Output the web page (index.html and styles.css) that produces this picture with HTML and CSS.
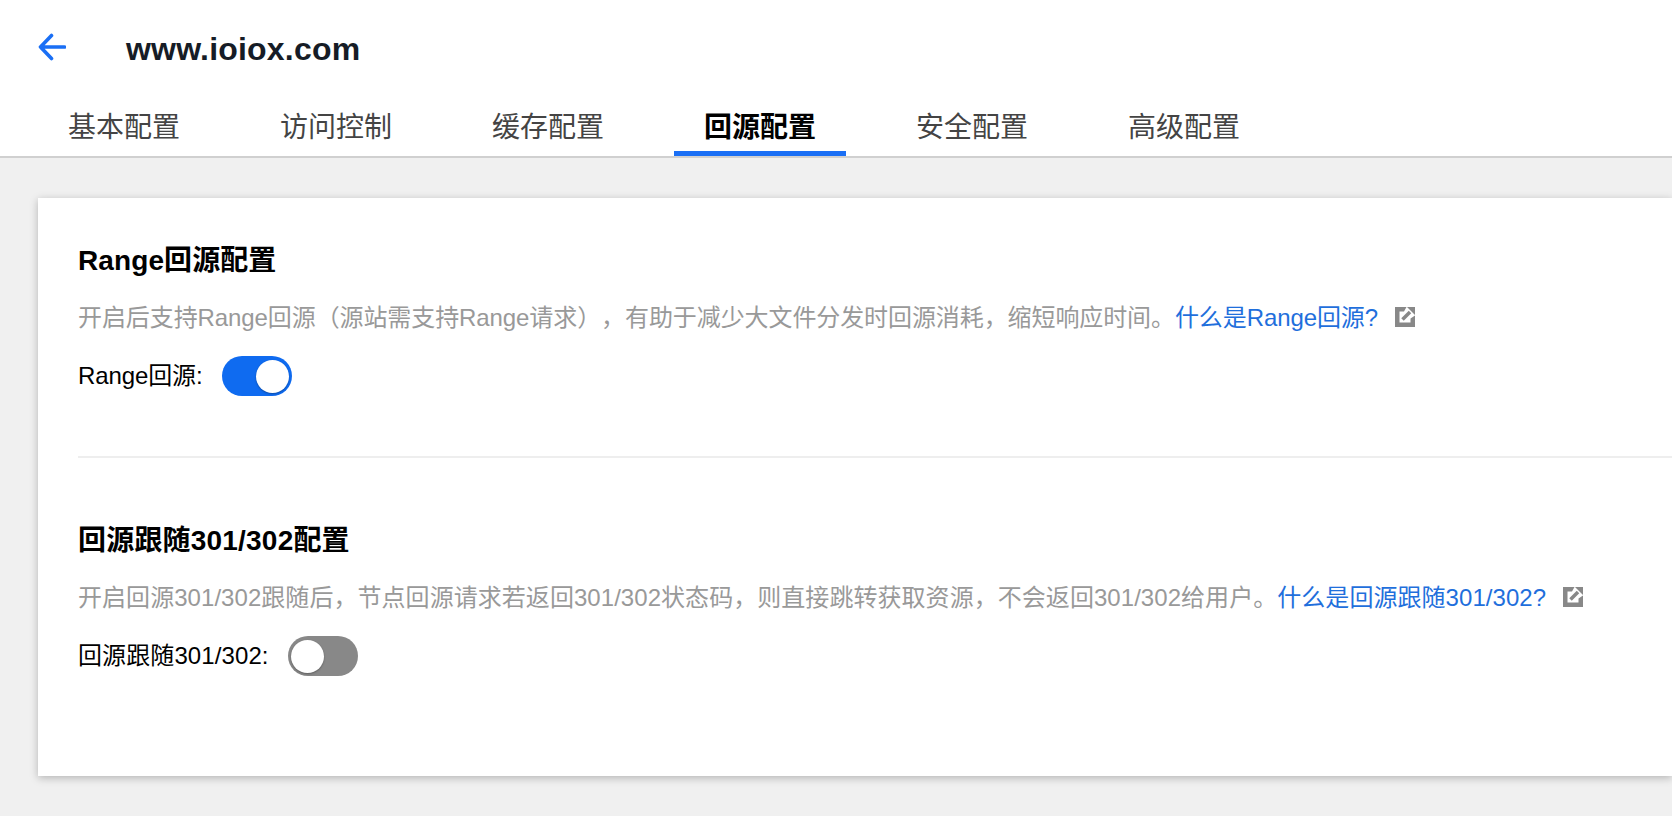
FILE: index.html
```html
<!DOCTYPE html>
<html lang="zh-CN">
<head>
  <meta charset="UTF-8">
  <title>www.ioiox.com</title>
  <link rel="stylesheet" href="styles.css">
</head>
<body>

  <div class="top">
    <div class="title-row">
      <svg class="back" width="28" height="28" viewBox="0 0 28 28">
        <path d="M26.5 14H2.5M13.5 2.5L2.5 14L13.5 25.5" fill="none" stroke="#1a6ff5" stroke-width="3.6" stroke-linecap="round" stroke-linejoin="round"/>
      </svg>
      <span class="domain">www.ioiox.com</span>
    </div>
    <div class="tabs">
      <a class="tab">基本配置</a>
      <a class="tab">访问控制</a>
      <a class="tab">缓存配置</a>
      <a class="tab active">回源配置</a>
      <a class="tab">安全配置</a>
      <a class="tab">高级配置</a>
    </div>
  </div>

  <div class="content">
    <div class="card">

      <div class="section first">
        <h2>Range回源配置</h2>
        <p class="desc">开启后支持Range回源（源站需支持Range请求），有助于减少大文件分发时回源消耗，缩短响应时间。<a class="link">什么是Range回源?</a><svg class="ext" width="20" height="20" viewBox="0 0 20 20">
            <path d="M0 0H11.5L9 4.5H4.5V15.5H15.5V11.5L20 8.5V20H0Z" fill="#888"/>
            <path d="M7.5 12.5L15 5" fill="none" stroke="#888" stroke-width="3.6"/>
            <path d="M12 0H20V8Z" fill="#888"/>
          </svg></p>
        <div class="row">
          <span class="label">Range回源:</span>
          <span class="switch on"><span class="knob"></span></span>
        </div>
      </div>

      <div class="section second">
        <h2>回源跟随301/302配置</h2>
        <p class="desc">开启回源301/302跟随后，节点回源请求若返回301/302状态码，则直接跳转获取资源，不会返回301/302给用户。<a class="link">什么是回源跟随301/302?</a><svg class="ext" width="20" height="20" viewBox="0 0 20 20">
            <path d="M0 0H11.5L9 4.5H4.5V15.5H15.5V11.5L20 8.5V20H0Z" fill="#888"/>
            <path d="M7.5 12.5L15 5" fill="none" stroke="#888" stroke-width="3.6"/>
            <path d="M12 0H20V8Z" fill="#888"/>
          </svg></p>
        <div class="row">
          <span class="label">回源跟随301/302:</span>
          <span class="switch"><span class="knob"></span></span>
        </div>
      </div>

    </div>
  </div>

</body>
</html>
```

FILE: styles.css
```css
body {
  margin: 0;
  background-color: #f0f0f0;
  font-family: "Liberation Sans", "Noto Sans CJK SC", sans-serif;
  color: #000;
  overflow-x: hidden;
  text-spacing-trim: space-all;
}

.top {
  background-color: white;
  border-bottom: 2px solid #d0d0d0;
}

.title-row {
  display: flex;
  align-items: center;
  height: 100px;
  padding-left: 38px;
}

.back {
  margin-right: 60px;
  margin-bottom: 6px;
}

.domain {
  margin-bottom: 2px;
  font-size: 32px;
  font-weight: bold;
  letter-spacing: 0.2px;
  color: #161c26;
}

.tabs {
  display: flex;
  gap: 40px;
  padding-left: 38px;
}

.tab {
  padding: 4px 30px 0;
  height: 47px;
  line-height: 47px;
  font-size: 28px;
  color: #444;
  border-bottom: 5px solid transparent;
}

.tab.active {
  color: #000;
  font-weight: bold;
  border-bottom-color: #1a6ff5;
}

.content {
  padding: 40px 0 40px 38px;
}

.card {
  background-color: white;
  padding: 0 0 40px 40px;
  box-shadow: 0 2px 8px rgba(0,0,0,0.25);
}

.section {
  padding: 61px 0 60px;
}

.section.first {
  padding-top: 41px;
  border-bottom: 2px solid #eee;
}

h2 {
  margin: 0 0 17px;
  font-size: 28px;
  line-height: 44px;
  font-weight: bold;
}

.first h2 {
  letter-spacing: 0.1px;
}

.second h2 {
  letter-spacing: 0.2px;
}

.desc {
  display: flex;
  align-items: center;
  margin: 0 0 20px;
  font-size: 24px;
  line-height: 36px;
  color: #999;
}

.first .desc {
  letter-spacing: -0.09px;
}

.second .desc {
  letter-spacing: 0.05px;
}

.link {
  color: #1f6fdc;
}

.ext {
  margin-left: 17px;
  margin-bottom: 2px;
}

.row {
  display: flex;
  align-items: center;
  gap: 19px;
  height: 40px;
}

.label {
  padding-bottom: 6px;
  font-size: 24px;
}

.first .label {
  letter-spacing: -0.1px;
}

.second .label {
  letter-spacing: 0.1px;
}

.switch {
  display: flex;
  align-items: center;
  box-sizing: border-box;
  width: 70px;
  height: 40px;
  padding: 0 3px;
  border-radius: 20px;
  background-color: #888;
}

.switch.on {
  justify-content: flex-end;
  background-color: #0f6bf0;
}

.knob {
  width: 33px;
  height: 33px;
  border-radius: 50%;
  background-color: white;
  box-shadow: 0 1px 2px rgba(0,0,0,0.3);
}
```
